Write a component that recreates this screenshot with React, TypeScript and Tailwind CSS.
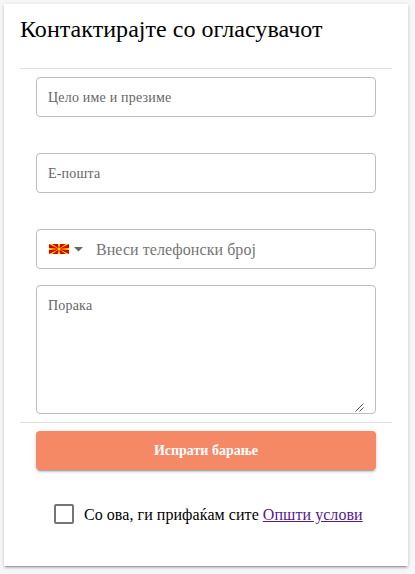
import type { ReactNode } from "react";

function MacedonianFlag() {
  return (
    <svg width="20" height="10" viewBox="0 0 20 10" aria-hidden="true">
      <rect width="20" height="10" fill="#d80000" />
      <path
        fill="#ffe000"
        d="M0 0h3.4l6.6 5zM20 0h-3.4l-6.6 5zM0 10h3.4l6.6-5zM20 10h-3.4l-6.6-5zM8.8 0h2.4l-1.2 5zM8.8 10h2.4l-1.2-5zM0 3.9v2.2l10-1.1zM20 3.9v2.2l-10-1.1z"
      />
      <circle cx="10" cy="5" r="1.8" fill="#ffe000" stroke="#d80000" strokeWidth="0.4" />
    </svg>
  );
}

function Field({ className = "", children }: { className?: string; children: ReactNode }) {
  return (
    <div className={`mx-4 flex h-10 items-center rounded border border-[#bdbdbd] px-[11px] ${className}`}>
      {children}
    </div>
  );
}

export default function App() {
  return (
    <main className="h-[574px] w-[415px] bg-[#f7f7fa] p-1 font-['Liberation_Serif','Times_New_Roman',serif] text-black">
      <section className="h-[562px] w-[404px] bg-white px-4 shadow-[0_3px_1px_-2px_rgba(0,0,0,0.2),0_2px_2px_0_rgba(0,0,0,0.14),0_1px_5px_0_rgba(0,0,0,0.12)]">
        <h1 className="h-16 pt-[9px] text-2xl leading-8 tracking-[0.04px]">Контактирајте со огласувачот</h1>

        <form className="border-t border-[#e0e0e0] pt-2" onSubmit={(event) => event.preventDefault()}>
          <Field>
            <input
              className="w-full pt-0.5 text-sm tracking-[0.2px] outline-none placeholder:text-[#666666]"
              placeholder="Цело име и презиме"
            />
          </Field>
          <Field className="mt-9">
            <input
              className="w-full pt-0.5 text-sm tracking-[0.2px] outline-none placeholder:text-[#666666]"
              placeholder="Е-пошта"
            />
          </Field>
          <Field className="mt-9">
            <button type="button" className="ml-px flex items-center gap-[5px]" aria-label="Избери држава">
              <MacedonianFlag />
              <svg width="9" height="5" viewBox="0 0 9 5" aria-hidden="true">
                <path d="M0 0h9L4.5 4.5z" fill="#666666" />
              </svg>
            </button>
            <input
              className="ml-[13px] w-full pt-0.5 text-base tracking-[0.06px] outline-none placeholder:text-[#757575]"
              placeholder="Внеси телефонски број"
            />
          </Field>

          <div className="mx-4 mt-4 h-[129px] rounded border border-[#bdbdbd] px-[11px] pt-2.5">
            <textarea
              className="block h-[116px] w-full resize-none text-sm tracking-[0.2px] outline-none placeholder:text-[#666666]"
              placeholder="Порака"
            />
            <svg className="relative -top-[9px] ml-auto" width="9" height="9" viewBox="0 0 9 9" aria-hidden="true">
              <path d="M0.5 8.5l8-8M4.5 8.5l4-4" stroke="#555555" strokeWidth="1" />
            </svg>
          </div>

          <div className="mt-2 border-t border-[#e0e0e0] px-4 pt-2">
            <button
              type="submit"
              className="h-[39px] w-full rounded bg-[#f58966] text-sm font-bold text-white shadow-[0_3px_1px_-2px_rgba(0,0,0,0.2),0_2px_2px_0_rgba(0,0,0,0.14),0_1px_5px_0_rgba(0,0,0,0.12)]"
            >
              Испрати барање
            </button>
          </div>

          <div className="mt-[31px] ml-[34px] flex items-center gap-[10px] text-base">
            <input
              type="checkbox"
              aria-label="Прифаќам"
              className="size-5 appearance-none rounded-xs border-2 border-[#757575]"
            />
            <p className="pt-0.5 tracking-[0.05px] whitespace-nowrap">
              Со ова, ги прифаќам сите{" "}
              <a href="#terms" className="text-[#551a8b] underline">
                Општи услови
              </a>
            </p>
          </div>
        </form>
      </section>
    </main>
  );
}
